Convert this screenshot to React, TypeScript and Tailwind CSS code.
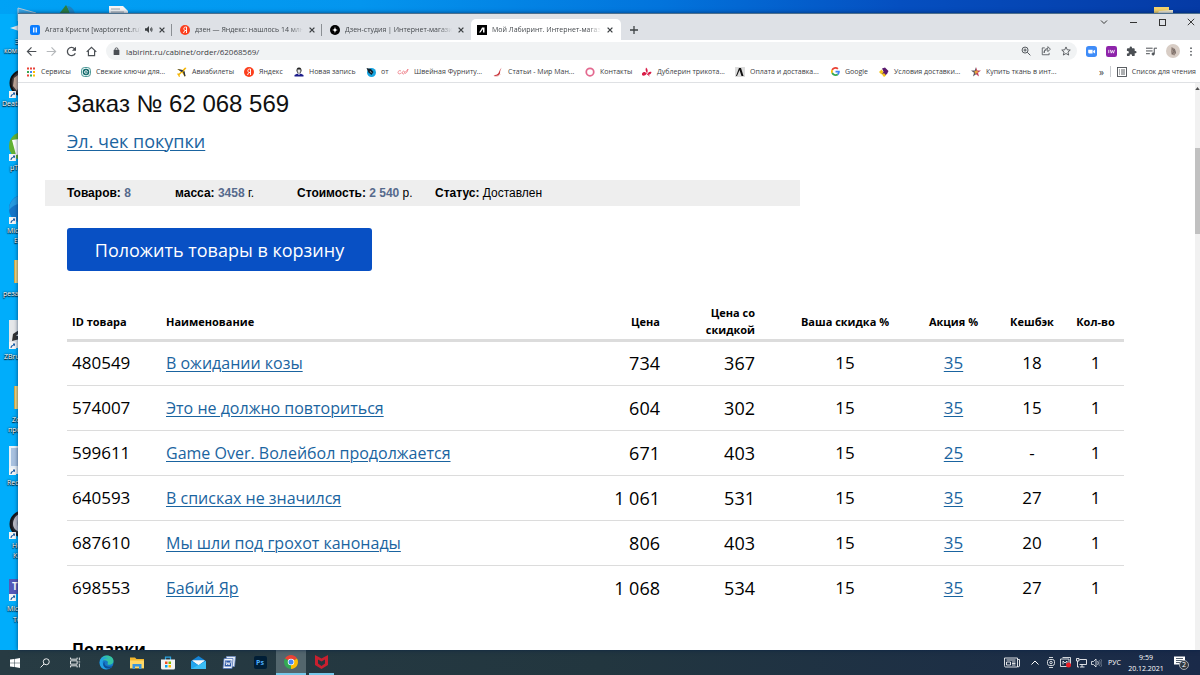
import type { ReactNode } from "react";

const uiFont = "font-['Open_Sans','Noto_Sans',sans-serif]";

function CloseMark({ className }: { className: string }) {
  return (
    <svg viewBox="0 0 10 10" className={className} fill="none" stroke="currentColor" strokeWidth="2.200">
      <path d="M1 1l8 8M9 1l-8 8" />
    </svg>
  );
}

function YandexIcon() {
  return (
    <svg viewBox="0 0 20 20" className="size-[10px] shrink-0">
      <circle cx="10" cy="10" r="10" fill="#fc3f1d" />
      <path d="M13 16V4h-1.800c-2.200 0-3.500 1.200-3.500 3.200 0 1.600.800 2.500 2 3.400L7 16M10 11h3" fill="none" stroke="#fff" strokeWidth="1.900" />
    </svg>
  );
}

function LabirintIcon({ dark }: { dark: boolean }) {
  return (
    <svg viewBox="0 0 20 20" className="size-[10px] shrink-0">
      <rect width="20" height="20" fill={dark ? "#000" : "#dcdcdc"} />
      {dark ? (
        <path d="M4 15l4-6 2-4h5v10h-3V8l-5 7z" fill="#fff" />
      ) : (
        <path d="M2 18L8 2h4l5 16h-4L9 6 4 18z" fill="#111" />
      )}
    </svg>
  );
}

const tabs: { title: string; icon: ReactNode; audio?: boolean; active?: boolean }[] = [
  {
    title: "Агата Кристи [waptorrent.ru]",
    audio: true,
    icon: (
      <svg viewBox="0 0 20 20" className="size-[10px] shrink-0">
        <rect width="20" height="20" rx="4" fill="#0a7cff" />
        <path d="M7.500 5v10M12.500 5v10" stroke="#fff" strokeWidth="2.600" />
      </svg>
    ),
  },
  { title: "дзен — Яндекс: нашлось 14 млн", icon: <YandexIcon /> },
  {
    title: "Дзен-студия | Интернет-магазин",
    icon: (
      <svg viewBox="0 0 20 20" className="size-[10px] shrink-0">
        <circle cx="10" cy="10" r="10" fill="#000" />
        <path d="M10 2c.300 6 1.500 7.700 8 8-6.500.300-7.700 2-8 8-.300-6-1.500-7.700-8-8 6.500-.300 7.700-2 8-8z" fill="#fff" />
      </svg>
    ),
  },
  { title: "Мой Лабиринт. Интернет-магазин", active: true, icon: <LabirintIcon dark /> },
];

const bookmarks: { label: string; width: string; icon: ReactNode }[] = [
  {
    label: "Сервисы",
    width: "w-[55px]",
    icon: (
      <svg viewBox="0 0 20 20" className="size-[10px] shrink-0">
        <path d="M2 1h4v4H2zM2 15h4v4H2z" fill="#ea4335" />
        <path d="M8 1h4v4H8zM14 1h4v4h-4z" fill="#e8453c" />
        <path d="M2 8h4v4H2zM8 15h4v4H8z" fill="#34a853" />
        <path d="M8 8h4v4H8z" fill="#4285f4" />
        <path d="M14 8h4v4h-4zM14 15h4v4h-4z" fill="#fbbc05" />
      </svg>
    ),
  },
  {
    label: "Свежие ключи для...",
    width: "w-[96px]",
    icon: (
      <svg viewBox="0 0 20 20" className="size-[10px] shrink-0">
        <rect x="1" y="1" width="18" height="18" rx="6" fill="#e8f6f4" stroke="#1b7a78" strokeWidth="1.500" />
        <circle cx="10" cy="10" r="6.500" fill="#12696b" />
        <path d="M7 10h6c0-4-6-4-6 0s4 4 6 2" fill="none" stroke="#fff" strokeWidth="1.500" />
      </svg>
    ),
  },
  {
    label: "Авиабилеты",
    width: "w-[67px]",
    icon: (
      <svg viewBox="0 0 20 20" className="size-[10px] shrink-0">
        <path d="M1 4l10 2 5-5 3 1-5 6 3 10-2 1-5-8-5 5 1 3-2 1-2-4-2-2 1-1h3l4-4-7-4z" fill="#f5b400" />
        <path d="M1 4l10 2 2 2-4 2zM12 10l3-2 2 10-2 1z" fill="#23314a" />
      </svg>
    ),
  },
  { label: "Яндекс", width: "w-[50px]", icon: <YandexIcon /> },
  {
    label: "Новая запись",
    width: "w-[72px]",
    icon: (
      <svg viewBox="0 0 20 20" className="size-[10px] shrink-0">
        <path d="M10 1c4 0 5 3 5 6s-2 6-5 6-5-3-5-6 1-6 5-6z" fill="#222" />
        <path d="M7 5h6v3c0 2-1 4-3 4s-3-2-3-4z" fill="#e8e8e8" />
        <path d="M1 19v-3l6-3 3 3 3-3 6 3v3z" fill="#1b1b8a" />
      </svg>
    ),
  },
  {
    label: "от",
    width: "w-[31px]",
    icon: (
      <svg viewBox="0 0 20 20" className="size-[10px] shrink-0">
        <circle cx="11" cy="11" r="9" fill="#17a4e0" />
        <path d="M1 2l9 2 5 6-4 6-6-5z" fill="#10222e" />
        <path d="M8 8l3 4" stroke="#fff" />
      </svg>
    ),
  },
  {
    label: "Швейная Фурниту...",
    width: "w-[96px]",
    icon: (
      <svg viewBox="0 0 22 20" className="h-[10px] w-[12px] shrink-0" fill="none" stroke="#ee7d86" strokeWidth="1.700">
        <path d="M7 8c-3-2-6 0-6 3s4 4 6 1M9 13c1-6 5-6 5-2s-4 4-5 0M14 10c4 0 5-3 7-6-1 6-4 9-6 9" />
      </svg>
    ),
  },
  {
    label: "Статьи - Мир Ман...",
    width: "w-[92px]",
    icon: (
      <svg viewBox="0 0 20 20" className="size-[10px] shrink-0">
        <path d="M18 1c-3 3-4 7-4 12-2 5-9 6-13 4 4-1 8-2 10-5 2-4 3-8 7-11z" fill="#c8383f" />
        <path d="M2 18c5 2 10 0 13-4" stroke="#e58d8d" fill="none" />
      </svg>
    ),
  },
  {
    label: "Контакты",
    width: "w-[57px]",
    icon: (
      <svg viewBox="0 0 20 20" className="size-[10px] shrink-0">
        <circle cx="10" cy="10" r="7.500" fill="none" stroke="#e3698f" strokeWidth="3.500" />
      </svg>
    ),
  },
  {
    label: "Дублерин трикота...",
    width: "w-[93px]",
    icon: (
      <svg viewBox="0 0 20 20" className="size-[10px] shrink-0" fill="#d81b46">
        <path d="M8 1c4 3 4 8 2 12C8 9 6 6 8 1zM0 13c3-4 7-4 9 1-3 4-7 4-9 2zM19 10c-5-1-7 1-8 5 4 1 7 0 8-5z" />
        <path d="M9 13l6 5" stroke="#d81b46" strokeWidth="1.800" />
      </svg>
    ),
  },
  { label: "Оплата и доставка...", width: "w-[96px]", icon: <LabirintIcon dark={false} /> },
  {
    label: "Google",
    width: "w-[48px]",
    icon: (
      <svg viewBox="0 0 48 48" className="size-[9px] shrink-0">
        <path fill="#EA4335" d="M24 9.500c3.540 0 6.710 1.220 9.210 3.600l6.850-6.850C35.900 2.380 30.470 0 24 0 14.620 0 6.510 5.380 2.560 13.220l7.980 6.190C12.430 13.720 17.740 9.500 24 9.500z" />
        <path fill="#4285F4" d="M46.980 24.550c0-1.570-.150-3.090-.380-4.550H24v9.020h12.940c-.580 2.960-2.260 5.480-4.780 7.180l7.730 6c4.510-4.180 7.090-10.360 7.090-17.650z" />
        <path fill="#FBBC05" d="M10.530 28.590A14.500 14.500 0 0 1 9.770 24c0-1.600.270-3.140.760-4.590l-7.980-6.190A23.900 23.900 0 0 0 0 24c0 3.880.920 7.540 2.560 10.780z" />
        <path fill="#34A853" d="M24 48c6.480 0 11.930-2.130 15.890-5.810l-7.730-6c-2.150 1.450-4.920 2.300-8.160 2.300-6.260 0-11.570-4.220-13.470-9.910l-7.980 6.190C6.510 42.620 14.620 48 24 48z" />
      </svg>
    ),
  },
  {
    label: "Условия доставки...",
    width: "w-[92px]",
    icon: (
      <svg viewBox="0 0 20 20" className="size-[10px] shrink-0">
        <path d="M6 3l6-2 7 7-3 6-6 4-4-5 3-4z" fill="#5a1a6e" />
        <path d="M0 10l5-5 4 5-4 5z" fill="#f3c51c" />
        <path d="M6 15l4-3 4 5-4 3z" fill="#f3c51c" />
      </svg>
    ),
  },
  {
    label: "Купить ткань в инт...",
    width: "w-[96px]",
    icon: (
      <svg viewBox="0 0 20 20" className="size-[10px] shrink-0">
        <path d="M10 0l2.500 7H20l-6 4.500L16 19l-6-4.500z" fill="#c2405f" />
        <path d="M10 0v14.500L4 19l2-7.500L0 7h7.500z" fill="#5b5560" />
        <path d="M7 8l6-1 1 4-6 3z" fill="#e7a13c" />
      </svg>
    ),
  },
];

const orderItems = [
  { id: "480549", name: "В ожидании козы", price: "734", sale: "367", own: "15", promo: "35", cashback: "18", qty: "1" },
  { id: "574007", name: "Это не должно повториться", price: "604", sale: "302", own: "15", promo: "35", cashback: "15", qty: "1" },
  { id: "599611", name: "Game Over. Волейбол продолжается", price: "671", sale: "403", own: "15", promo: "25", cashback: "-", qty: "1" },
  { id: "640593", name: "В списках не значился", price: "1 061", sale: "531", own: "15", promo: "35", cashback: "27", qty: "1" },
  { id: "687610", name: "Мы шли под грохот канонады", price: "806", sale: "403", own: "15", promo: "35", cashback: "20", qty: "1" },
  { id: "698553", name: "Бабий Яр", price: "1 068", sale: "534", own: "15", promo: "35", cashback: "27", qty: "1" },
];

function Shortcut() {
  return (
    <svg viewBox="0 0 14 14" className="absolute bottom-0 left-0 size-[7px]">
      <rect width="14" height="14" fill="#f5f5f5" />
      <path d="M3 12c0-4 2-6 5-6V3h4v5l-2-1c-3 0-4 2-5 5z" fill="#1d5fa8" />
    </svg>
  );
}

function DesktopIcons() {
  const label = "absolute whitespace-nowrap text-[7px] leading-[10px] text-white [text-shadow:0_1px_1px_#000,0_0_2px_#000]";
  return (
    <div className={`absolute inset-0 overflow-hidden ${uiFont}`}>
      <svg viewBox="0 0 26 26" className="absolute left-[10px] top-[6px] size-[26px]">
        <path d="M8 2l18 5v12L8 15z" fill="#3aa8e8" stroke="#b9cad8" />
        <path d="M0 22l9-3 9 3-9 3z" fill="#dfe7ec" />
      </svg>
      <span className={`${label} left-[15px] top-[37px]`}>Этот</span>
      <span className={`${label} left-[4px] top-[46px]`}>компьютер</span>
      <svg viewBox="0 0 18 10" className="absolute left-[59px] top-[5px] h-[10px] w-[18px]">
        <path d="M0 9L7 0l5 9z" fill="#2c7d3f" />
        <path d="M8 1c4 0 7 3 8 8h-5z" fill="#1d83c4" />
      </svg>
      <svg viewBox="0 0 19 10" className="absolute left-[109px] top-[6px] h-[10px] w-[19px]">
        <path d="M0 0h14l5 5v5H0z" fill="#f5f5f5" />
        <path d="M2 3h9M2 6h13" stroke="#9aa3aa" />
      </svg>
      <svg viewBox="0 0 19 8" className="absolute right-[27px] top-[7px] h-[8px] w-[19px]">
        <path d="M0 0h15v3h4v5H0z" fill="#f6d36b" />
        <path d="M5 4l14-1v5H3z" fill="#f7efd8" />
      </svg>

      <div className="absolute left-[9px] top-[69px] h-[29px] w-[28px]">
        <svg viewBox="0 0 28 28" className="size-[28px]">
          <circle cx="14" cy="14" r="12.500" fill="#3b3434" stroke="#111" strokeWidth="2" />
          <path d="M5 9l4-3 2 8-3 8-4-5z" fill="#c0a695" />
        </svg>
        <Shortcut />
      </div>
      <span className={`${label} left-[2px] top-[99px]`}>Death</span>

      <div className="absolute left-[9px] top-[132px] h-[29px] w-[28px]">
        <svg viewBox="0 0 28 28" className="size-[28px]">
          <circle cx="14" cy="14" r="14" fill="#62b132" />
          <path d="M3 8l7-1v11l9-1v4L7 23z" fill="#fff" />
        </svg>
        <Shortcut />
      </div>
      <span className={`${label} left-[10px] top-[163px]`}>µTorrent</span>

      <div className="absolute left-[9px] top-[195px] h-[29px] w-[28px]">
        <svg viewBox="0 0 28 28" className="size-[28px]">
          <circle cx="14" cy="14" r="14" fill="#1575c8" />
          <path d="M0 15C0 5 8 0 15 0v9C7 8 3 12 0 15z" fill="#279be0" />
        </svg>
        <Shortcut />
      </div>
      <span className={`${label} left-[7px] top-[226px]`}>Microsoft</span>
      <span className={`${label} left-[14px] top-[236px]`}>Edge</span>

      <div className="absolute left-[14px] top-[260px] h-[23px] w-[20px] border-l border-[#cda948] bg-[#f3d77e]" />
      <span className={`${label} left-[3px] top-[289px]`}>резак</span>

      <div className="absolute left-[9px] top-[320px] h-[29px] w-[28px]">
        <svg viewBox="0 0 28 28" className="size-[28px]">
          <rect width="28" height="28" fill="#e5e7e9" />
          <path d="M4 14l6-4v3l-3 3h4v3l-8 2z" fill="#333" />
        </svg>
        <Shortcut />
      </div>
      <span className={`${label} left-[4px] top-[352px]`}>ZBrush</span>

      <div className="absolute left-[14px] top-[386px] h-[23px] w-[20px] border-l border-[#cda948] bg-[#f3d77e]" />
      <span className={`${label} left-[12px] top-[415px]`}>Zoo</span>
      <span className={`${label} left-[8px] top-[425px]`}>проект</span>

      <div className="absolute left-[9px] top-[446px] h-[29px] w-[28px]">
        <svg viewBox="0 0 28 28" className="size-[28px]">
          <rect width="28" height="28" fill="#e9f1f8" />
          <path d="M2 2h24v18H2z" fill="#a9c2e0" />
        </svg>
        <Shortcut />
      </div>
      <span className={`${label} left-[7px] top-[478px]`}>Recuva</span>

      <div className="absolute left-[9px] top-[510px] h-[29px] w-[28px]">
        <svg viewBox="0 0 28 28" className="size-[28px]">
          <circle cx="14" cy="14" r="12.500" fill="#25252c" stroke="#15151a" strokeWidth="2" />
          <path d="M4 14c0-5 3-9 7-10-3 5-3 13 0 18-4-1-7-4-7-8z" fill="#babac4" />
        </svg>
        <Shortcut />
      </div>
      <span className={`${label} left-[12px] top-[541px]`}>Hex</span>
      <span className={`${label} left-[13px] top-[551px]`}>Kit</span>

      <div className="absolute left-[9px] top-[579px] h-[22px] w-[28px]">
        <div className="h-[15px] w-[16px] bg-[#5559b8] pl-[3px] text-[10px] font-bold leading-[15px] text-white">T</div>
        <Shortcut />
      </div>
      <span className={`${label} left-[7px] top-[604px]`}>Microsoft</span>
      <span className={`${label} left-[13px] top-[615px]`}>Teams</span>
    </div>
  );
}

function TabStrip() {
  const windowButton = "flex h-[8px] w-[18px] items-center justify-center";
  return (
    <div className="flex h-[26px] shrink-0 items-end bg-[#dee1e6] pl-[4px]">
      {tabs.map((tab, i) => (
        <div
          key={tab.title}
          className={
            tab.active
              ? "flex h-[21px] w-[150px] items-center rounded-t-[5px] bg-white pl-[6px] pr-[7px]"
              : i < 2
                ? "flex h-[21px] w-[150px] items-center pl-[8px]"
                : "flex h-[21px] w-[149px] items-center pl-[8px] pr-[6px]"
          }
        >
          {tab.icon}
          <span className="ml-[5px] min-w-0 flex-1 overflow-hidden whitespace-nowrap text-[7px] leading-[12px] text-[#45494d] [mask-image:linear-gradient(to_right,#000_88%,transparent)]">
            {tab.title}
          </span>
          {tab.audio && (
            <svg viewBox="0 0 14 12" className="ml-[4px] h-[7px] w-[8px] shrink-0" fill="#3c4043">
              <path d="M0 4h3l4-4v12L3 8H0zM9 3c2 1 2 5 0 6zM11 1c3 2 3 8 0 10" />
            </svg>
          )}
          <button type="button" aria-label="Закрыть вкладку" className="ml-[5px] shrink-0 px-[1px] text-[#3c4043]">
            <CloseMark className="size-[6px]" />
          </button>
          {i < 2 && <span className="ml-[5px] h-[12px] w-px shrink-0 bg-[#8b8f94]" />}
        </div>
      ))}
      <button type="button" aria-label="Новая вкладка" className="flex h-[21px] w-[26px] items-center justify-center text-[#3c4043]">
        <svg viewBox="0 0 10 10" className="size-[8px]" fill="none" stroke="currentColor" strokeWidth="1.600">
          <path d="M5 0v10M0 5h10" />
        </svg>
      </button>
      <div className="ml-auto flex h-[26px] items-start gap-[11px] pt-[4px] text-[#333]">
        <button type="button" aria-label="Поиск вкладок" className={windowButton}>
          <svg viewBox="0 0 10 8" className="h-[6px] w-[8px]" fill="none" stroke="currentColor" strokeWidth="1.300">
            <path d="M1 2l4 4 4-4" />
          </svg>
        </button>
        <button type="button" aria-label="Свернуть" className={windowButton}>
          <span className="h-px w-[7px] bg-[#333]" />
        </button>
        <button type="button" aria-label="Развернуть" className={windowButton}>
          <span className="size-[7px] border border-[#333]" />
        </button>
        <button type="button" aria-label="Закрыть" className={windowButton}>
          <svg viewBox="0 0 10 10" className="size-[8px]" fill="none" stroke="currentColor" strokeWidth="1.200">
            <path d="M1 1l8 8M9 1l-8 8" />
          </svg>
        </button>
      </div>
    </div>
  );
}

function Toolbar() {
  return (
    <div className="flex h-[22px] shrink-0 items-center bg-white pl-[8px] text-[#4b4f54]">
      <button type="button" aria-label="Назад" className="w-[20px]">
        <svg viewBox="0 0 16 16" className="size-[11px]" fill="none" stroke="currentColor" strokeWidth="1.700">
          <path d="M15 8H2M8 2L2 8l6 6" />
        </svg>
      </button>
      <button type="button" aria-label="Вперёд" className="w-[20px] text-[#b5b8bb]">
        <svg viewBox="0 0 16 16" className="size-[11px]" fill="none" stroke="currentColor" strokeWidth="1.700">
          <path d="M1 8h13M8 2l6 6-6 6" />
        </svg>
      </button>
      <button type="button" aria-label="Обновить" className="w-[20px]">
        <svg viewBox="0 0 16 16" className="size-[11px]" fill="none" stroke="currentColor" strokeWidth="1.900">
          <path d="M13.500 10.500A6 6 0 1 1 12.500 4L14 6" />
          <path d="M14.500 1v6h-6z" fill="currentColor" stroke="none" />
        </svg>
      </button>
      <button type="button" aria-label="Домой" className="w-[20px]">
        <svg viewBox="0 0 16 16" className="size-[11px]" fill="none" stroke="currentColor" strokeWidth="1.700">
          <path d="M1 8.500L8 2l7 6.500M3.500 7v7h9V7" />
        </svg>
      </button>
      <div className="flex h-[18px] min-w-0 flex-1 items-center rounded-full bg-[#f1f3f4] pl-[7px] pr-[6px]">
        <svg viewBox="0 0 12 14" className="h-[8px] w-[7px] shrink-0">
          <rect x="1" y="5" width="10" height="9" rx="1" fill="#4b4f54" />
          <path d="M3.500 6V4a2.500 2.500 0 0 1 5 0v2" fill="none" stroke="#4b4f54" strokeWidth="1.600" />
        </svg>
        <input
          aria-label="Адресная строка"
          defaultValue="labirint.ru/cabinet/order/62068569/"
          className="ml-[6px] h-[14px] min-w-0 flex-1 bg-transparent text-[8px] text-[#3c4043] outline-none"
        />
        <div className="flex items-center gap-[10px]">
          <svg viewBox="0 0 16 16" className="size-[10px]" fill="none" stroke="currentColor" strokeWidth="1.500">
            <circle cx="6.500" cy="6.500" r="4.800" />
            <path d="M10 10l5 5M4 6.500h5M6.500 4v5" />
          </svg>
          <svg viewBox="0 0 16 16" className="size-[10px]" fill="none" stroke="currentColor" strokeWidth="1.300">
            <path d="M6 3H2v11h11v-3M5 11c0-4 3-5 6-5V9l4-4-4-4v3C7 4 5 6 5 11z" />
          </svg>
          <svg viewBox="0 0 16 16" className="size-[10px]" fill="none" stroke="currentColor" strokeWidth="1.400">
            <path d="M8 1.500l2 4.600 4.800.400-3.700 3.200 1.200 4.800L8 12l-4.300 2.500 1.200-4.800L1.200 6.500 6 6.100z" />
          </svg>
        </div>
      </div>
      <div className="flex items-center gap-[9px] pl-[9px] pr-[7px]">
        <svg viewBox="0 0 20 20" className="size-[11px]">
          <rect width="20" height="20" rx="5" fill="#3f8cf8" />
          <path d="M4 7h8v6.500H5.500A1.500 1.500 0 0 1 4 12zM13 9l3.500-2v6.500L13 11.500z" fill="#fff" />
        </svg>
        <svg viewBox="0 0 20 20" className="size-[11px]">
          <rect width="20" height="20" rx="4" fill="#8e24aa" />
          <path d="M5 7v6M8 7l1.500 6L11.500 8l2 5L15.500 7" fill="none" stroke="#fff" strokeWidth="1.500" />
        </svg>
        <svg viewBox="0 0 24 24" className="size-[11px]" fill="#4b4f54">
          <path d="M20.500 11H19V7a2 2 0 0 0-2-2h-4V3.500a2.500 2.500 0 0 0-5 0V5H4a2 2 0 0 0-2 2v3.800h1.500a2.700 2.700 0 0 1 0 5.400H2V20a2 2 0 0 0 2 2h3.800v-1.500a2.700 2.700 0 0 1 5.400 0V22H17a2 2 0 0 0 2-2v-4h1.500a2.500 2.500 0 0 0 0-5z" />
        </svg>
        <svg viewBox="0 0 20 16" className="h-[9px] w-[11px]" fill="none" stroke="currentColor" strokeWidth="1.800">
          <path d="M0 2h12M0 7h12M0 12h7M15 12V2h5" />
          <circle cx="13" cy="12.500" r="2" fill="currentColor" />
        </svg>
        <svg viewBox="0 0 28 28" className="size-[14px]">
          <circle cx="14" cy="14" r="14" fill="#d8cdc5" />
          <path d="M11 6l6 3 3 8-3 6-6-2-1-6z" fill="#9b8b83" />
          <path d="M13 9l3 6-4 5M17 10l2 9" stroke="#6b625d" fill="none" strokeWidth="1.500" />
        </svg>
        <svg viewBox="0 0 4 16" className="h-[9px] w-[4px]" fill="#4b4f54">
          <circle cx="2" cy="2" r="1.500" />
          <circle cx="2" cy="8" r="1.500" />
          <circle cx="2" cy="14" r="1.500" />
        </svg>
      </div>
    </div>
  );
}

function BookmarksBar() {
  return (
    <nav className="flex h-[21px] shrink-0 items-center border-b border-[#dfe1e4] bg-white pb-px pl-[8px] text-[7px] leading-[12px] text-[#3c4043]">
      {bookmarks.map((b) => (
        <a key={b.label} href="#" className={`flex shrink-0 items-center gap-[5px] whitespace-nowrap ${b.width}`}>
          {b.icon}
          {b.label}
        </a>
      ))}
      <span className="ml-auto text-[10px] leading-[12px]">»</span>
      <span className="ml-[6px] h-[11px] w-px bg-[#c9ccd0]" />
      <a href="#" className="ml-[6px] flex shrink-0 items-center gap-[5px] whitespace-nowrap pr-[4px]">
        <svg viewBox="0 0 20 20" className="size-[10px]" fill="none" stroke="#4b4f54" strokeWidth="1.800">
          <rect x="1" y="1" width="18" height="18" />
          <path d="M4 6h2M8 6h8M4 10h2M8 10h8M4 14h2M8 14h8" />
        </svg>
        Список для чтения
      </a>
    </nav>
  );
}

function OrderPage() {
  const link = "text-[#1a64a0] underline decoration-1 underline-offset-2";
  return (
    <main className="min-w-0 flex-1 overflow-hidden bg-white pl-[27px] font-['Open_Sans','Noto_Sans',sans-serif] text-black">
      <h1 className="pl-[22px] pt-[4px] font-['Liberation_Sans',Arial,sans-serif] text-[24px] leading-[34px] text-[#111]">
        Заказ № 62 068 569
      </h1>
      <p className="pl-[22px] pt-[7px] text-[18px] leading-[26px]">
        <a href="#" className={link}>Эл. чек покупки</a>
      </p>
      <div className="mt-[26px] flex h-[26px] w-[755px] max-w-full items-center bg-[#eee] pl-[22px] font-['Liberation_Sans',Arial,sans-serif] text-[12px] leading-[16px]">
        <span className="w-[108px]"><b>Товаров:</b> <b className="text-[#566a8c]">8</b></span>
        <span className="w-[122px]"><b>масса:</b> <b className="text-[#566a8c]">3458</b> г.</span>
        <span className="w-[138px]"><b>Стоимость:</b> <b className="text-[#566a8c]">2 540</b> р.</span>
        <span><b>Статус:</b> Доставлен</span>
      </div>
      <div className="pl-[22px] pr-[71px]">
        <button type="button" className="mt-[22px] block h-[43px] w-[305px] rounded-[3px] bg-[#0850c4] text-[18px] leading-[26px] text-white">
          Положить товары в корзину
        </button>
        <table className="mt-[33px] w-full table-fixed border-collapse text-[17px] leading-[24px]">
          <colgroup>
            <col className="w-[94px]" />
            <col />
            <col className="w-[75px]" />
            <col className="w-[115px]" />
            <col className="w-[130px]" />
            <col className="w-[87px]" />
            <col className="w-[70px]" />
            <col className="w-[57px]" />
          </colgroup>
          <thead>
            <tr className="h-[36px] border-b-3 border-[#dcdcdc] text-[11px] leading-[17px]">
              <th className="p-0 pl-[5px] text-left font-bold">ID товара</th>
              <th className="p-0 pl-[5px] text-left font-bold">Наименование</th>
              <th className="p-0 pr-[5px] text-right font-bold">Цена</th>
              <th className="p-0 pl-[20px] pr-[25px] text-right font-bold">Цена со скидкой</th>
              <th className="p-0 font-bold">Ваша скидка %</th>
              <th className="p-0 font-bold">Акция %</th>
              <th className="p-0 font-bold">Кешбэк</th>
              <th className="p-0 font-bold">Кол-во</th>
            </tr>
          </thead>
          <tbody>
            {orderItems.map((item) => (
              <tr key={item.id} className="h-[45px] border-b border-[#dcdcdc] last:border-b-0">
                <td className="p-0 pl-[5px]">{item.id}</td>
                <td className="p-0 pl-[5px] text-[16px]"><a href="#" className={link}>{item.name}</a></td>
                <td className="p-0 pr-[5px] text-right text-[18px]">{item.price}</td>
                <td className="p-0 pr-[25px] text-right text-[18px]">{item.sale}</td>
                <td className="p-0 text-center">{item.own}</td>
                <td className="p-0 text-center"><a href="#" className={link}>{item.promo}</a></td>
                <td className="p-0 text-center">{item.cashback}</td>
                <td className="p-0 text-center">{item.qty}</td>
              </tr>
            ))}
          </tbody>
        </table>
        <h2 className="mt-[26px] pl-[5px] text-[16px] font-bold leading-[26px]">Подарки</h2>
      </div>
    </main>
  );
}

function Taskbar() {
  return (
    <footer className={`flex h-[25px] shrink-0 items-center bg-linear-to-r from-[#273b43] via-[#22363f] to-[#1a2a49] text-white ${uiFont}`}>
      <button type="button" aria-label="Пуск" className="flex w-[30px] justify-center">
        <svg viewBox="0 0 20 20" className="size-[10px]" fill="#fff">
          <path d="M0 3l8-1v7.500H0zM9 1.800L20 0v9.500H9zM0 10.500h8V18l-8-1zM9 10.500h11V20L9 18.200z" />
        </svg>
      </button>
      <button type="button" aria-label="Поиск" className="flex w-[30px] justify-center">
        <svg viewBox="0 0 20 20" className="size-[10px]" fill="none" stroke="#fff" strokeWidth="1.800">
          <circle cx="12.500" cy="7.500" r="6" />
          <path d="M8 12l-7 7" />
        </svg>
      </button>
      <button type="button" aria-label="Представление задач" className="flex w-[30px] justify-center">
        <svg viewBox="0 0 20 20" className="size-[11px]" fill="none" stroke="#fff" strokeWidth="1.600">
          <path d="M1 1v3h12V1M1 19v-3h12v3M1 7h12v6H1zM17 1v5M17 12v7M15.500 9h3" />
        </svg>
      </button>
      <button type="button" aria-label="Edge" className="flex w-[32px] justify-center">
        <svg viewBox="0 0 32 32" className="size-[15px]">
          <circle cx="16" cy="16" r="15" fill="#1678c8" />
          <path d="M2 13C4 5 10 1 17 1c8 0 14 5 14 12 0 5-4 8-9 8-4 0-5-2-3-4 1-5-8-8-13-3-2 1-3 0-4-1z" fill="#35c3a3" />
          <path d="M2 13C5 4 14 3 19 8c-8-3-12 3-11 9 1 8 8 12 15 12C12 34-1 27 2 13z" fill="#22a2e5" />
          <path d="M12 15c-2 7 4 12 16 9-4 6-14 7-18 0-2-4-1-8 2-9z" fill="#0c4f96" />
        </svg>
      </button>
      <button type="button" aria-label="Проводник" className="flex w-[30px] justify-center">
        <svg viewBox="0 0 28 24" className="h-[12px] w-[14px]">
          <path d="M0 1h10l3 3h15v19H0z" fill="#f3b72e" />
          <path d="M0 7h28v15H0z" fill="#ffd968" />
          <path d="M5 14h18v10h-5v-5h-8v5H5z" fill="#3a96dd" />
        </svg>
      </button>
      <button type="button" aria-label="Магазин" className="flex w-[31px] justify-center">
        <svg viewBox="0 0 28 28" className="size-[14px]">
          <path d="M9 8V2h10v6" fill="none" stroke="#2ba3e0" strokeWidth="2.500" />
          <path d="M0 7h28v17a3 3 0 0 1-3 3H3a3 3 0 0 1-3-3z" fill="#f3f3f3" />
          <path d="M8 11h5v5H8z" fill="#f25022" />
          <path d="M15 11h5v5h-5z" fill="#7fba00" />
          <path d="M8 18h5v5H8z" fill="#00a4ef" />
          <path d="M15 18h5v5h-5z" fill="#ffb900" />
        </svg>
      </button>
      <button type="button" aria-label="Почта" className="flex w-[31px] justify-center">
        <svg viewBox="0 0 30 26" className="h-[13px] w-[15px]">
          <path d="M0 10L15 0l15 10v16H0z" fill="#1583d4" />
          <path d="M3 9h24l-12 9z" fill="#f5f8fa" />
          <path d="M0 10l30 16H0z" fill="#22a5ee" />
          <path d="M30 10L0 26h30z" fill="#3bbdf5" />
          <path d="M2 9h26l-13 9z" fill="#f5f8fa" />
        </svg>
      </button>
      <button type="button" aria-label="Word" className="flex w-[30px] justify-center">
        <svg viewBox="0 0 28 28" className="size-[14px]">
          <path d="M9 1h18l-2 20H7z" fill="#e6edf8" stroke="#6d8cc4" strokeWidth="1.500" />
          <path d="M4 5h18l-2 20H2z" fill="#f2f6fc" stroke="#4a6fb5" strokeWidth="1.500" />
          <path d="M6 9h13l-1 12H5z" fill="#2c59a8" />
          <path d="M8 11l1 7 3-5 2 5 3-7" fill="none" stroke="#fff" strokeWidth="1.700" />
        </svg>
      </button>
      <button type="button" aria-label="Photoshop" className="flex w-[32px] justify-center">
        <span className="flex h-[13px] w-[13px] items-center justify-center rounded-[2px] bg-[#001e36] text-[7px] font-bold leading-[10px] text-[#4cb0ff]">
          Ps
        </span>
      </button>
      <button type="button" aria-label="Chrome" className="flex h-[25px] w-[30px] items-center justify-center border-b-2 border-[#76c8ea] bg-[#53666d]">
        <svg viewBox="0 0 28 28" className="size-[14px]">
          <path d="M14 14L1.900 7A14 14 0 0 1 26.100 7z" fill="#ea4335" />
          <path d="M14 14L26.100 7A14 14 0 0 1 14 28z" fill="#fbbc05" />
          <path d="M14 14v14A14 14 0 0 1 1.900 7z" fill="#34a853" />
          <circle cx="14" cy="14" r="6.500" fill="#fff" />
          <circle cx="14" cy="14" r="5" fill="#4285f4" />
        </svg>
      </button>
      <button type="button" aria-label="McAfee" className="ml-[3px] flex h-[25px] w-[25px] items-center justify-center border-b-2 border-[#76c8ea]">
        <svg viewBox="0 0 26 28" className="h-[14px] w-[13px]">
          <path d="M0 0l13 7L26 0v20l-13 8L0 20z" fill="#c8202f" />
          <path d="M6 9l7 4 7-4v8l-7 5-7-5z" fill="#22363f" />
        </svg>
      </button>

      <div className="ml-auto flex items-center pr-[11px] text-white">
        <svg viewBox="0 0 32 22" className="h-[11px] w-[16px]" fill="none" stroke="#fff" strokeWidth="1.700">
          <path d="M1 2h26v18H3c-2 0-2-2-2-3zM27 5h4v13c0 2-4 2-4 0" />
          <path d="M5 6h18M5 10h8v6H5zM16 10h7M16 13h7M16 16h7" />
        </svg>
        <svg viewBox="0 0 16 10" className="ml-[11px] h-[5px] w-[8px]" fill="none" stroke="#fff" strokeWidth="2">
          <path d="M1 9l7-7 7 7" />
        </svg>
        <svg viewBox="0 0 16 22" className="ml-[8px] h-[11px] w-[8px]" fill="none" stroke="#fff" strokeWidth="1.600">
          <rect x="1" y="5" width="14" height="12" rx="4" />
          <circle cx="8" cy="11" r="2.500" />
          <path d="M4 1h8M4 21h8" />
        </svg>
        <svg viewBox="0 0 24 22" className="ml-[5px] h-[11px] w-[12px]" fill="none" stroke="#fff" strokeWidth="1.600">
          <path d="M1 4h17v15H1zM5 1h16v14M6 15V8l4 4 4-4v7" />
          <circle cx="17" cy="16" r="5" fill="#ee1c25" stroke="none" />
        </svg>
        <svg viewBox="0 0 22 20" className="ml-[4px] h-[10px] w-[11px]" fill="none" stroke="#fff" strokeWidth="1.700">
          <path d="M7 3h14v10H7M12 13v5M8 18h9M1 1h5v5H1zM3 6v12h3" />
        </svg>
        <svg viewBox="0 0 22 20" className="ml-[4px] h-[10px] w-[11px]" fill="none" stroke="#fff" strokeWidth="1.500">
          <path d="M1 7h4l5-5v16l-5-5H1zM13 6c2 2 2 6 0 8" />
          <path d="M16 4c3 3 3 9 0 12M19 2c4 4 4 12 0 16" stroke="#8994a4" />
        </svg>
        <span className="ml-[6px] w-[20px] text-[7px] leading-[10px]">РУС</span>
        <span className="flex w-[36px] flex-col text-center text-[7px] leading-[11px]">
          <span>9:59</span>
          <span>20.12.2021</span>
        </span>
        <div className="relative ml-[10px] h-[14px] w-[15px]">
          <svg viewBox="0 0 22 22" className="size-[11px]">
            <path d="M0 1h22v16h-7l-4 4v-4H0z" fill="#fff" />
            <path d="M4 5h14M4 9h14M4 13h9" stroke="#1e2d42" strokeWidth="1.500" />
          </svg>
          <span className="absolute bottom-0 right-0 flex size-[10px] items-center justify-center rounded-full border border-[#a3a9b0] bg-[#333a42] text-[7px] leading-[8px]">
            2
          </span>
        </div>
      </div>
    </footer>
  );
}

export default function App() {
  return (
    <div className="flex h-screen flex-col overflow-hidden">
      <div className="relative min-h-0 flex-1 bg-[#00adfb] bg-[linear-gradient(to_right,#00a2f5_0%,#0495ee_30%,#0274dc_55%,#054fc0_75%,#053aa5_100%)] bg-[length:100%_14px] bg-no-repeat">
        <DesktopIcons />
        <div className="relative h-full pl-[18px] pt-[13px]">
          <div className={`flex h-full flex-col border-t border-[#4d6f8c] bg-white shadow-[0_0_4px_rgba(0,30,70,0.7)] ${uiFont}`}>
            <TabStrip />
            <Toolbar />
            <BookmarksBar />
            <div className="flex min-h-0 flex-1">
              <OrderPage />
              <div className="flex w-[5px] shrink-0 flex-col items-center bg-[#f1f1f1]">
                <svg viewBox="0 0 6 4" className="mt-[4px] h-[3px] w-[5px] shrink-0" fill="#505050">
                  <path d="M0 4l3-4 3 4z" />
                </svg>
                <div className="mt-[58px] h-[86px] w-full shrink-0 bg-[#c1c1c1]" />
              </div>
            </div>
          </div>
        </div>
      </div>
      <Taskbar />
    </div>
  );
}
